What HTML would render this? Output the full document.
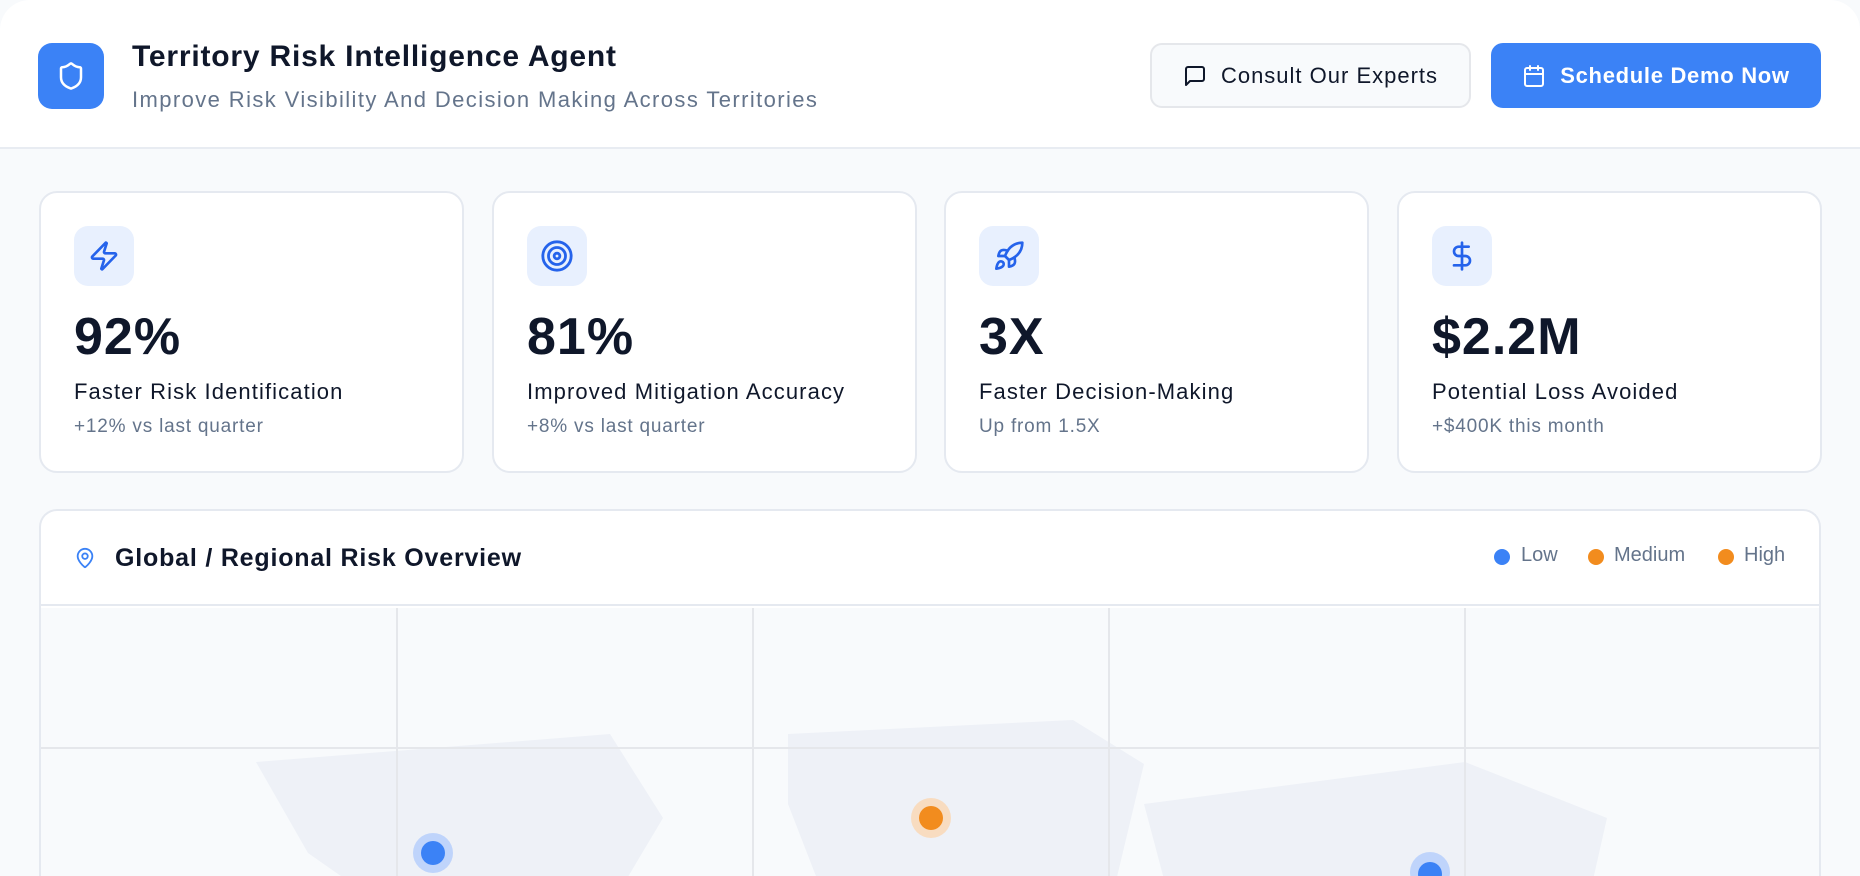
<!DOCTYPE html>
<html><head><meta charset="utf-8"><style>
*{box-sizing:border-box;margin:0;padding:0}
body{width:1860px;height:876px;overflow:hidden;background:#f8fafc;font-family:"Liberation Sans",sans-serif;position:relative;color:#0f172a}
.hdr{position:absolute;left:0;top:0;width:1860px;height:149px;background:#fff;border-bottom:2px solid #e8ecf2;border-radius:30px 30px 0 0}
.logo{position:absolute;left:38px;top:43px;width:66px;height:66px;background:#3b82f6;border-radius:14px;display:flex;align-items:center;justify-content:center}
.t1{position:absolute;left:132px;top:40px;font-size:30px;font-weight:bold;letter-spacing:0.8px;color:#0f172a}
.t2{position:absolute;left:132px;top:87px;font-size:22px;letter-spacing:1.4px;color:#64748b}
.btn{position:absolute;top:43px;height:65px;border-radius:12px;display:flex;align-items:center;justify-content:center;font-size:22px;gap:14px}
.b1{left:1150px;width:321px;background:#f8fafc;border:2px solid #e5e7eb;color:#0f172a;letter-spacing:1px}
.b2{left:1491px;width:330px;background:#3b82f6;color:#fff;font-weight:bold;letter-spacing:0.7px}
.card{position:absolute;top:191px;width:425px;height:282px;background:#fff;border:2px solid #e5e9f0;border-radius:18px}
.ic{position:absolute;left:33px;top:33px;width:60px;height:60px;background:#e8f0fe;border-radius:14px;display:flex;align-items:center;justify-content:center}
.card .n{position:absolute;left:33px;top:114px;font-size:52px;font-weight:bold;letter-spacing:1px;color:#0f172a}
.card .l{position:absolute;left:33px;top:186px;font-size:22px;letter-spacing:1.1px;color:#0f172a}
.card .s{position:absolute;left:33px;top:223px;font-size:19px;letter-spacing:0.8px;color:#64748b}
.map{position:absolute;left:39px;top:509px;width:1782px;height:367px;background:#fff;border:2px solid #e5e9f0;border-bottom:none;border-radius:18px 18px 0 0;overflow:hidden}
.mh{height:95px;border-bottom:2px solid #e5e9f0;position:relative}
.mt{position:absolute;left:74px;top:33px;font-size:25px;font-weight:bold;letter-spacing:0.8px;color:#0f172a}
.leg{position:absolute;top:33px;font-size:20px;color:#64748b}
.dot{position:absolute;top:38px;width:16px;height:16px;border-radius:50%}
</style></head><body>
<div class="hdr">
<div class="logo"><svg width="30" height="30" viewBox="0 0 24 24" fill="none" stroke="#fff" stroke-width="2" stroke-linecap="round" stroke-linejoin="round"><path d="M20 13c0 5-3.5 7.5-7.66 8.95a1 1 0 0 1-.67-.01C7.5 20.5 4 18 4 13V6a1 1 0 0 1 1-1c2 0 4.5-1.2 6.240-2.72a1.17 1.17 0 0 1 1.52 0C14.51 3.81 17 5 19 5a1 1 0 0 1 1 1z"/></svg></div>
<div class="t1">Territory Risk Intelligence Agent</div>
<div class="t2">Improve Risk Visibility And Decision Making Across Territories</div>
<div class="btn b1"><svg width="24" height="24" viewBox="0 0 24 24" fill="none" stroke="#0f172a" stroke-width="2" stroke-linecap="round" stroke-linejoin="round"><path d="M21 15a2 2 0 0 1-2 2H7l-4 4V5a2 2 0 0 1 2-2h14a2 2 0 0 1 2 2z"/></svg>Consult Our Experts</div>
<div class="btn b2"><svg width="24" height="24" viewBox="0 0 24 24" fill="none" stroke="#fff" stroke-width="2" stroke-linecap="round" stroke-linejoin="round"><rect x="3" y="4" width="18" height="18" rx="2"/><path d="M16 2v4M8 2v4M3 10h18"/></svg>Schedule Demo Now</div>
</div>

<div class="card" style="left:39px"><div class="ic"><svg width="32" height="32" viewBox="0 0 24 24" fill="none" stroke="#2563eb" stroke-width="2" stroke-linecap="round" stroke-linejoin="round"><path d="M4 14a1 1 0 0 1-.78-1.63l9.9-10.2a.5.5 0 0 1 .86.46l-1.92 6.02A1 1 0 0 0 13 10h7a1 1 0 0 1 .78 1.63l-9.9 10.2a.5.5 0 0 1-.86-.46l1.92-6.02A1 1 0 0 0 11 14z"/></svg></div><div class="n">92%</div><div class="l">Faster Risk Identification</div><div class="s">+12% vs last quarter</div></div>
<div class="card" style="left:492px"><div class="ic"><svg width="34" height="34" viewBox="0 0 24 24" fill="none" stroke="#2563eb" stroke-width="2"><circle cx="12" cy="12" r="10"/><circle cx="12" cy="12" r="6"/><circle cx="12" cy="12" r="2"/></svg></div><div class="n">81%</div><div class="l">Improved Mitigation Accuracy</div><div class="s">+8% vs last quarter</div></div>
<div class="card" style="left:944px"><div class="ic"><svg width="32" height="32" viewBox="0 0 24 24" fill="none" stroke="#2563eb" stroke-width="2" stroke-linecap="round" stroke-linejoin="round"><path d="M4.5 16.5c-1.5 1.26-2 5-2 5s3.74-.5 5-2c.71-.84.7-2.130-.09-2.91a2.18 2.18 0 0 0-2.91-.09z"/><path d="m12 15-3-3a22 22 0 0 1 2-3.95A12.88 12.88 0 0 1 22 2c0 2.72-.78 7.5-6 11a22.35 22.35 0 0 1-4 2z"/><path d="M9 12H4s.55-3.03 2-4c1.62-1.08 5 0 5 0M12 15v5s3.03-.55 4-2c1.08-1.62 0-5 0-5"/></svg></div><div class="n">3X</div><div class="l">Faster Decision-Making</div><div class="s">Up from 1.5X</div></div>
<div class="card" style="left:1397px"><div class="ic"><svg width="32" height="32" viewBox="0 0 24 24" fill="none" stroke="#2563eb" stroke-width="2" stroke-linecap="round" stroke-linejoin="round"><path d="M12 2v20M17 5H9.5a3.5 3.5 0 0 0 0 7h5a3.5 3.5 0 0 1 0 7H6"/></svg></div><div class="n">$2.2M</div><div class="l">Potential Loss Avoided</div><div class="s">+$400K this month</div></div>

<div class="map">
<div class="mh">
<svg style="position:absolute;left:33px;top:34px" width="22" height="26" viewBox="0 0 24 24" fill="none" stroke="#3b82f6" stroke-width="2" stroke-linecap="round" stroke-linejoin="round"><path d="M20 10c0 5-5.5 10.2-7.4 11.8a1 1 0 0 1-1.2 0C9.5 20.2 4 15 4 10a8 8 0 0 1 16 0"/><circle cx="12" cy="10" r="3"/></svg>
<div class="mt">Global / Regional Risk Overview</div>
<div class="dot" style="left:1453px;background:#3b82f6"></div><div class="leg" style="left:1480px">Low</div>
<div class="dot" style="left:1547px;background:#f28c1e"></div><div class="leg" style="left:1573px">Medium</div>
<div class="dot" style="left:1677px;background:#f28c1e"></div><div class="leg" style="left:1703px">High</div>
</div>
<svg style="position:absolute;left:-39px;top:-509px" width="1860" height="1000">
<rect x="39" y="606" width="1782" height="400" fill="#f8fafc"/>
<g fill="#eef1f7">
<polygon points="254,760 608,732 661,816 611,900 376,900 306,851"/>
<polygon points="786,732 1071,718 1142,762 1109,900 824,900 786,802"/>
<polygon points="1142,802 1463,760 1605,816 1586,900 1168,900"/>
</g>
<g stroke="#e5e7eb" stroke-width="2">
<line x1="395" y1="606" x2="395" y2="900"/><line x1="751" y1="606" x2="751" y2="900"/><line x1="1107" y1="606" x2="1107" y2="900"/><line x1="1463" y1="606" x2="1463" y2="900"/>
<line x1="39" y1="746" x2="1821" y2="746"/>
</g>
<circle cx="431" cy="851" r="20" fill="#bfd4fb"/><circle cx="431" cy="851" r="12" fill="#3b82f6"/>
<circle cx="929" cy="816" r="20" fill="#f8dcc0"/><circle cx="929" cy="816" r="12" fill="#f28c1e"/>
<circle cx="1428" cy="870" r="20" fill="#bfd4fb"/><circle cx="1428" cy="872" r="12" fill="#3b82f6"/>
</svg>
</div>
</body></html>
